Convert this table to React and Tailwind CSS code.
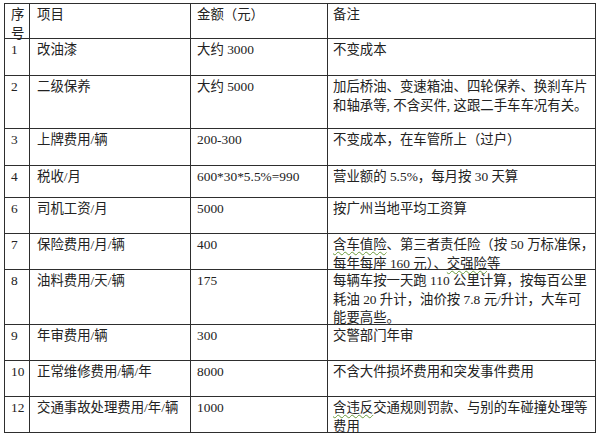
import React from "react";

const W = ({ children }) => (
  <span className="underline decoration-wavy decoration-[#6a9a3a] decoration-1 underline-offset-[2px]">
    {children}
  </span>
);

const rows = [
  { h: "h-[34px]", n: <>序<br />号</>, item: "项目", amt: "金额（元）", note: "备注" },
  { h: "h-[36px]", n: "1", item: "改油漆", amt: "大约 3000", note: "不变成本" },
  {
    h: "h-[52px]",
    n: "2",
    item: "二级保养",
    amt: "大约 5000",
    note: <>加后桥油、变速箱油、四轮保养、换刹车片<br />和轴承等, 不含买件, 这跟二手车车况有关。</>,
  },
  { h: "h-[36px]", n: "3", item: "上牌费用/辆", amt: "200-300", note: "不变成本，在车管所上（过户）" },
  { h: "h-[31px]", n: "4", item: "税收/月", amt: "600*30*5.5%=990", note: "营业额的 5.5%，每月按 30 天算" },
  { h: "h-[35px]", n: "6", item: "司机工资/月", amt: "5000", note: "按广州当地平均工资算" },
  {
    h: "h-[35px]",
    n: "7",
    item: "保险费用/月/辆",
    amt: "400",
    note: <><W>含车值险</W>、第三者责任险（按 50 万标准保，<br />每年每座 160 元）、<W>交强险</W>等</>,
  },
  {
    h: "h-[54px]",
    n: "8",
    item: "油料费用/天/辆",
    amt: "175",
    note: <>每辆车按一天跑 110 公里计算，按每百公里<br />耗油 20 升计，油价按 7.8 元/升计，大车可<br />能要高些。</>,
  },
  { h: "h-[35px]", n: "9", item: "年审费用/辆", amt: "300", note: "交警部门年审" },
  { h: "h-[35px]", n: "10", item: "正常维修费用/辆/年", amt: "8000", note: "不含大件损坏费用和突发事件费用" },
  {
    h: "h-[35px]",
    n: "12",
    item: "交通事故处理费用/年/辆",
    amt: "1000",
    note: <><W>含违反</W>交通规则罚款、与别的车碰撞处理等<br />费用</>,
  },
];

export default function App() {
  return (
    <div
      className="w-[600px] h-[437px] bg-white overflow-hidden pt-[3px] pl-[4px] text-[#222] text-[13.4px] leading-[18.5px]"
      style={{ fontFamily: '"Liberation Serif", "Noto Sans CJK SC", serif' }}
    >
      <table className="table-fixed border-collapse w-[591px]">
        <colgroup>
          <col className="w-[25px]" />
          <col className="w-[161px]" />
          <col className="w-[137px]" />
          <col className="w-[268px]" />
        </colgroup>
        <tbody>
          {rows.map((r, i) => (
            <tr key={i}>
              <td className="border border-[#2e2e2e] p-0 align-top">
                <div className={`${r.h} pt-[2px] pl-[6px] overflow-visible whitespace-nowrap`}>{r.n}</div>
              </td>
              <td className="border border-[#2e2e2e] p-0 align-top">
                <div className={`${r.h} pt-[2px] pl-[7px] overflow-visible whitespace-nowrap`}>{r.item}</div>
              </td>
              <td className="border border-[#2e2e2e] p-0 align-top">
                <div className={`${r.h} pt-[2px] pl-[6px] overflow-visible whitespace-nowrap`}>{r.amt}</div>
              </td>
              <td className="border border-[#2e2e2e] p-0 align-top">
                <div className={`${r.h} pt-[2px] pl-[5px] overflow-visible whitespace-nowrap`}>{r.note}</div>
              </td>
            </tr>
          ))}
        </tbody>
      </table>
    </div>
  );
}
